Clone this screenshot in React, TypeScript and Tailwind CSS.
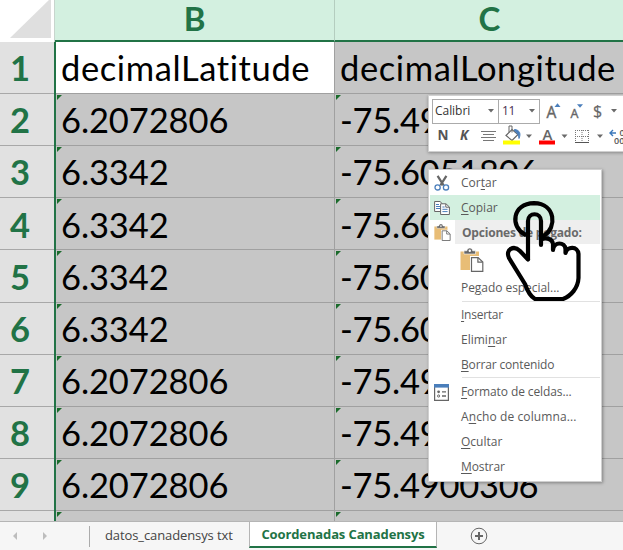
import React from "react";

const rows = [
  ["6.2072806", "-75.4900306"],
  ["6.3342", "-75.6051806"],
  ["6.3342", "-75.6051806"],
  ["6.3342", "-75.6051806"],
  ["6.3342", "-75.6051806"],
  ["6.2072806", "-75.4900306"],
  ["6.2072806", "-75.4900306"],
  ["6.2072806", "-75.4900306"],
];

function Flag() {
  return (
    <svg className="absolute left-px top-[1px]" width="5" height="5" viewBox="0 0 5 5">
      <path d="M0 0H5L0 5Z" fill="#1b6b2c" />
    </svg>
  );
}

function Caret() {
  return (
    <svg width="6" height="4" viewBox="0 0 6 4" className="shrink-0">
      <path d="M0 0H6L3 3.4Z" fill="#6a6a6a" />
    </svg>
  );
}

function Scissors() {
  return (
    <svg width="16" height="16" viewBox="0 0 16 16" fill="none">
      <path d="M3.6 0.8L9.6 10.4M12.400 0.8L6.400 10.400" stroke="#666" strokeWidth="2.200" />
      <circle cx="3.600" cy="12.400" r="2.600" stroke="#4a7ebb" strokeWidth="1.300" />
      <circle cx="12" cy="12.400" r="2.600" stroke="#4a7ebb" strokeWidth="1.300" />
    </svg>
  );
}

function CopyIcon() {
  return (
    <svg width="16" height="16" viewBox="0 0 16 16" fill="none">
      <path d="M.6 1.5H6L8.6 4V11.5H.6Z" fill="#fff" stroke="#666" />
      <path d="M2 4.500H5M2 6.500H6M2 8.500H6" stroke="#4a7ebb" />
      <path d="M6.6 3.8H12L15.4 7V14.5H6.6Z" fill="#fff" stroke="#666" />
      <path d="M11.8 4V7.2H15.4" stroke="#666" />
      <path d="M8.4 7H10.6M8.4 9.3H13.6M8.4 11.6H13.6" stroke="#4a7ebb" />
    </svg>
  );
}

function PasteIcon({ size }: { size: number }) {
  return (
    <svg width={size} height={size} viewBox="0 0 23 24" fill="none">
      <path d="M0 3.500H18.500V22H0Z" fill="#e8bd76" />
      <path d="M3.500 2.800H6.300C6.800 .8 7.800 0 9.300 0S11.800 .8 12.200 2.800H15V6H3.500Z" fill="#666" stroke="#fff" strokeWidth=".6" />
      <circle cx="9.300" cy="2.800" r="1.200" fill="#fff" />
      <path d="M11 9.600H17.600L22.300 14V23.300H11Z" fill="#fff" stroke="#fff" strokeWidth="3" />
      <path d="M11 9.600H17.600L22.300 14V23.300H11Z" fill="#fff" stroke="#666" strokeWidth="1.200" />
      <path d="M17.400 9.600V14.200H22" stroke="#666" strokeWidth="1.200" />
    </svg>
  );
}

function FormatIcon() {
  return (
    <svg width="15" height="17" viewBox="0 0 15 17" fill="none">
      <path d="M.6 2V16.3H14.4V2" fill="#fff" stroke="#666" strokeWidth="1.2" />
      <path d="M0 0H15V3.6H0Z" fill="#4a7ebb" />
      <circle cx="4.600" cy="7.800" r="1.400" fill="#666" />
      <circle cx="4.600" cy="12" r="1.100" stroke="#666" />
      <path d="M8 7.800H12M8 12H12" stroke="#666" strokeWidth="1.300" />
    </svg>
  );
}

function Item({
  pre = "",
  hot,
  post,
  icon,
  className = "",
  track = "",
}: {
  pre?: string;
  hot: string;
  post: string;
  icon?: React.ReactNode;
  className?: string;
  track?: string;
}) {
  return (
    <div className={`flex h-[25px] shrink-0 items-center pt-px ${className}`}>
      <span className="flex w-[31px] shrink-0 pl-[4px]">{icon}</span>
      <span className={`whitespace-pre leading-none ${track}`}>
        {pre}
        <span className="underline decoration-1 underline-offset-2">{hot}</span>
        {post}
      </span>
    </div>
  );
}

function MiniToolbar() {
  return (
    <div className="absolute left-[428px] top-[95px] flex h-[57px] w-[210px] flex-col border border-[#d0d0d0] bg-white pl-[3px] pt-[3px] shadow-[0_1px_3px_rgba(0,0,0,0.3)]">
      <div className="flex h-[25px] items-center">
        <div className="flex h-[25px] w-[67px] items-center justify-between border border-[#ababab] pb-[2px] pl-[2px] pr-[4px] font-['Open_Sans',sans-serif] text-[12px] tracking-[-0.05px] text-[#333]">
          Calibri
          <Caret />
        </div>
        <div className="-ml-px flex h-[25px] w-[42px] items-center justify-between border border-[#ababab] pb-[2px] pl-[3px] pr-[4px] font-['Open_Sans',sans-serif] text-[12px] tracking-[-0.4px] text-[#4a3050]">
          11
          <Caret />
        </div>
        <svg width="90" height="25" viewBox="0 0 90 25" className="shrink-0">
          <text x="6.500" y="18.500" fontSize="15.500" fill="#666" stroke="#666" strokeWidth=".4" fontFamily="Open Sans">A</text>
          <path d="M14.500 8L17.500 4.200L20.500 8Z" fill="#4a7ebb" />
          <text x="30.500" y="18.500" fontSize="12.500" fill="#666" stroke="#666" strokeWidth=".4" fontFamily="Open Sans">A</text>
          <path d="M37 5.200H43L40 8.800Z" fill="#4a7ebb" />
          <text x="53" y="17.500" fontSize="16" fill="#666" stroke="#666" strokeWidth=".2" fontFamily="Open Sans">$</text>
          <path d="M71 10H77L74 13.400Z" fill="#6a6a6a" />
        </svg>
      </div>
      <svg width="195" height="25" viewBox="0 0 195 25" className="shrink-0">
        <text x="5.500" y="16" fontSize="13.500" fontWeight="700" fill="#555" fontFamily="Open Sans">N</text>
        <text x="28" y="16" fontSize="13.500" fontWeight="700" fontStyle="italic" fill="#555" fontFamily="Open Sans">K</text>
        <path d="M49 7.500H64M51 10.500H62M49 13.500H64M51 16.500H62" stroke="#777" />
        <g fill="none">
          <path d="M74 11.500L80 5.500L86 10.500L80 16.500Z" fill="#fff" stroke="#666" strokeWidth="1.200" />
          <path d="M77 8.500V2H80V8.500" stroke="#666" />
          <path d="M82.500 5.500C88 6 89 10 87 14.500C86.500 11 86 9.500 82.500 7Z" fill="#4a7ebb" stroke="#4a7ebb" />
        </g>
        <path d="M71 16.500H88V20.500H71Z" fill="#ff0" />
        <path d="M94 10.500H100L97 14ZM129.500 10.500H135.500L132.500 14ZM165 10.500H171L168 14Z" fill="#6a6a6a" />
        <text x="110.500" y="16" fontSize="15" fontWeight="600" fill="#666" fontFamily="Open Sans">A</text>
        <path d="M107 16.500H123V20.500H107Z" fill="red" />
        <path d="M143.500 6V19M156.500 6V19M150 6V19M143 6.500H157M143 12.500H157" stroke="#777" strokeDasharray="1 1" fill="none" />
        <path d="M143 18.500H157" stroke="#555" />
        <path d="M178 9H184M181 6L178 9L181 12" stroke="#3b78bb" strokeWidth="1.400" fill="none" />
        <text x="187.500" y="12" fontSize="9" fontWeight="600" fill="#555" fontFamily="Open Sans">0</text>
        <text x="182" y="19.500" fontSize="9" fontWeight="600" fill="#555" fontFamily="Open Sans">00</text>
      </svg>
    </div>
  );
}

function ContextMenu() {
  return (
    <div className="absolute left-[428px] top-[169px] flex h-[313px] w-[174px] flex-col border border-[#d0d0d0] bg-white pl-px pr-px font-['Open_Sans',sans-serif] text-[12px] text-[#5a5a5a] shadow-[1px_1px_3px_rgba(0,0,0,0.35)]">
      <Item pre="Cor" hot="t" post="ar" icon={<Scissors />} />
      <Item hot="C" post="opiar" icon={<CopyIcon />} className="bg-[#d3f0e0]" />
      <div className="flex h-[24px] shrink-0 items-center">
        <span className="flex w-[25px] shrink-0 pl-[4px]"><PasteIcon size={17} /></span>
        <span className="flex h-full flex-1 items-center whitespace-pre bg-[#eeeeee] pl-[7px] pt-px font-bold tracking-[-0.2px] text-[#6a6a6a]">Opciones de pegado:</span>
      </div>
      <div className="flex h-[31px] shrink-0 items-center pl-[30px]"><PasteIcon size={24} /></div>
      <Item pre="Pe" hot="g" post="ado especial..." track="tracking-[-0.05px]" />
      <div className="ml-[32px] mt-px h-px shrink-0 bg-[#e1e1e1]" />
      <Item hot="I" post="nsertar" track="tracking-[-0.25px]" />
      <Item pre="Elimi" hot="n" post="ar" />
      <Item hot="B" post="orrar contenido" track="tracking-[-0.15px]" />
      <div className="mb-px ml-[32px] h-px shrink-0 bg-[#e1e1e1]" />
      <Item hot="F" post="ormato de celdas..." icon={<FormatIcon />} track="tracking-[-0.1px]" />
      <Item pre="A" hot="n" post="cho de columna..." track="tracking-[0.1px]" />
      <Item hot="O" post="cultar" />
      <Item hot="M" post="ostrar" track="tracking-[-0.1px]" />
    </div>
  );
}

function Hand() {
  return (
    <svg className="absolute left-[500px] top-[190px]" width="90" height="120" viewBox="0 0 90 120" fill="none" stroke="#000" strokeWidth="4.200" strokeLinejoin="round" strokeLinecap="round">
      <path d="M25 44.500C10 37 12 13.500 34 13.200C56 13.500 57 38 44 45.500" />
      <path d="M28 69.500V31C28 22 41 22 41 31V55V50C44 47 52 48 53 54V60C54 51 65 52 65.500 59V63C67 56 78 56 78.500 64V88C78 98 71 106 63 109H35C30 106 27 100 25 94L9 68C5 59 14 55 20 61L28 69.500" />
    </svg>
  );
}

export default function App() {
  return (
    <div className="relative h-[550px] w-[623px] overflow-hidden bg-[#f6f6f6]">
      <div className="flex h-[521px] w-[640px] flex-col overflow-hidden bg-[#c6c6c6] font-[Lato,sans-serif]">
        <div className="flex h-[42px] shrink-0 text-[33px] font-bold leading-[38px] text-[#217346]">
          <div className="w-[55px] shrink-0 bg-white">
            <svg width="55" height="42"><path d="M10 38H51V-2Z" fill="#dfdfdf" /><path d="M54.500 0V42" stroke="#c8d5ce" /></svg>
          </div>
          <div className="flex w-[279px] shrink-0 items-center justify-center border-b-2 border-[#217346] bg-[#d3f0e0] pb-[4px]">B</div>
          <div className="flex flex-1 items-center justify-center border-b-2 border-b-[#217346] border-l border-l-[#b4cdbf] bg-[#d3f0e0] pb-[4px] pl-[4px]">C</div>
        </div>
        <div className="flex h-[52px] shrink-0 text-[34.500px] leading-none text-black">
          <div className="flex w-[54px] shrink-0 items-center justify-center border-b border-[#a8a8a8] bg-[#e1e1e1] pr-[14px] pt-[2px] font-bold text-[#217346]">1</div>
          <div className="w-[2px] shrink-0 bg-[#217346]" />
          <div className="flex w-[278px] shrink-0 items-center border-b border-[#a0a0a0] bg-white pl-[5px] pt-[2px] tracking-[0.6px]"><span>decimalLatitude</span></div>
          <div className="flex flex-1 items-center whitespace-nowrap border-b border-l border-[#a0a0a0] pl-[5px] pt-[2px] tracking-[0.6px]"><span>decimalLongitude</span></div>
        </div>
        {rows.map(([lat, lon], i) => (
          <div key={i} className="flex h-[52.150px] shrink-0 text-[34.500px] leading-none text-black">
            <div className="flex w-[54px] shrink-0 items-center justify-center border-b border-[#a8a8a8] bg-[#e1e1e1] pr-[14px] pt-[2px] font-bold text-[#217346]">{i + 2}</div>
            <div className="w-[2px] shrink-0 bg-[#217346]" />
            <div className="relative flex w-[278px] shrink-0 items-center border-b border-[#a0a0a0] pl-[5px] pt-[2px] tracking-[-0.1px]"><Flag /><span>{lat}</span></div>
            <div className="relative flex flex-1 items-center border-b border-l border-[#a0a0a0] pl-[5px] pt-[2px] tracking-[-0.25px]"><Flag /><span>{lon}</span></div>
          </div>
        ))}
        <div className="flex h-[20px] shrink-0">
          <div className="w-[54px] shrink-0 bg-[#e1e1e1]" />
          <div className="w-[2px] shrink-0 bg-[#217346]" />
          <div className="relative w-[278px] shrink-0"><Flag /></div>
          <div className="relative flex-1 border-l border-[#a0a0a0]"><Flag /></div>
        </div>
      </div>
      <div className="flex h-[29px] items-start border-t border-[#b5b5b5] bg-[#f6f6f6] font-['Open_Sans',sans-serif]">
        <svg width="90" height="28" viewBox="0 0 90 28" className="shrink-0">
          <path d="M17 10V18L13 14ZM43 10V18L47 14Z" fill="#bdbdbd" />
          <path d="M89.500 4V25" stroke="#ababab" />
        </svg>
        <div className="flex h-[27px] w-[159px] shrink-0 items-center whitespace-nowrap pl-[15px] text-[13px] tracking-[-0.1px] text-[#444]"><span>datos_canadensys txt</span></div>
        <div className="flex h-[26px] w-[188px] shrink-0 items-center justify-center whitespace-nowrap border-x border-b-2 border-x-[#b5b5b5] border-b-[#217346] bg-white pt-px text-[13px] font-bold tracking-[-0.12px] text-[#217346]"><span>Coordenadas Canadensys</span></div>
        <svg width="18" height="18" viewBox="0 0 18 18" className="ml-[33px] mt-[5px]" fill="none" stroke="#666">
          <circle cx="9" cy="9" r="7.800" />
          <path d="M9 5V13M5 9H13" strokeWidth="2" />
        </svg>
      </div>
      <MiniToolbar />
      <ContextMenu />
      <Hand />
    </div>
  );
}
